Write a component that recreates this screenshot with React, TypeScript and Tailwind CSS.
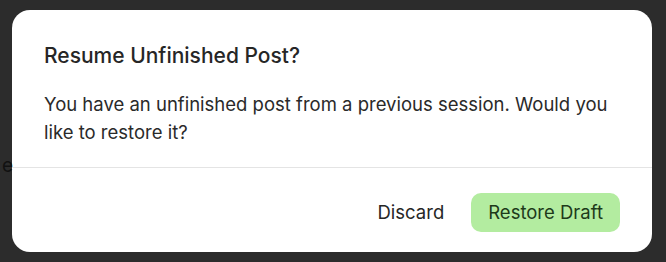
import React from "react";

export default function App() {
  return (
    <div
      className="relative w-[666px] h-[262px] bg-[#2c2c2c] overflow-hidden pt-[10px] pl-[12px]"
      style={{ fontFamily: "Inter, 'Noto Sans', sans-serif" }}
    >
      <div className="w-[640px] h-[242px] bg-white rounded-[18px] flex flex-col">
        <div className="px-8 pt-[32px] pb-[21px]">
          <h2 className="text-[21px] leading-[28px] font-medium text-[#262626]">
            Resume Unfinished Post?
          </h2>
          <p className="mt-5 text-[18.5px] leading-[28px] text-[#2a2a2a]">
            You have an unfinished post from a previous session. Would you like to restore it?
          </p>
        </div>
        <div className="border-t border-[#e4e4e4]" />
        <div className="flex justify-end items-center gap-[27px] px-8 pt-[25px] pb-5">
          <button className="text-[18.5px] font-normal text-[#262626]">Discard</button>
          <button className="h-[39px] px-[17px] rounded-[10px] bg-[#b3eca0] text-[18.5px] font-normal text-[#1d3a1a]">
            Restore Draft
          </button>
        </div>
      </div>
      <span className="absolute left-[2px] top-[152px] text-[19px] leading-[28px] text-[#111111]">e</span>
    </div>
  );
}
